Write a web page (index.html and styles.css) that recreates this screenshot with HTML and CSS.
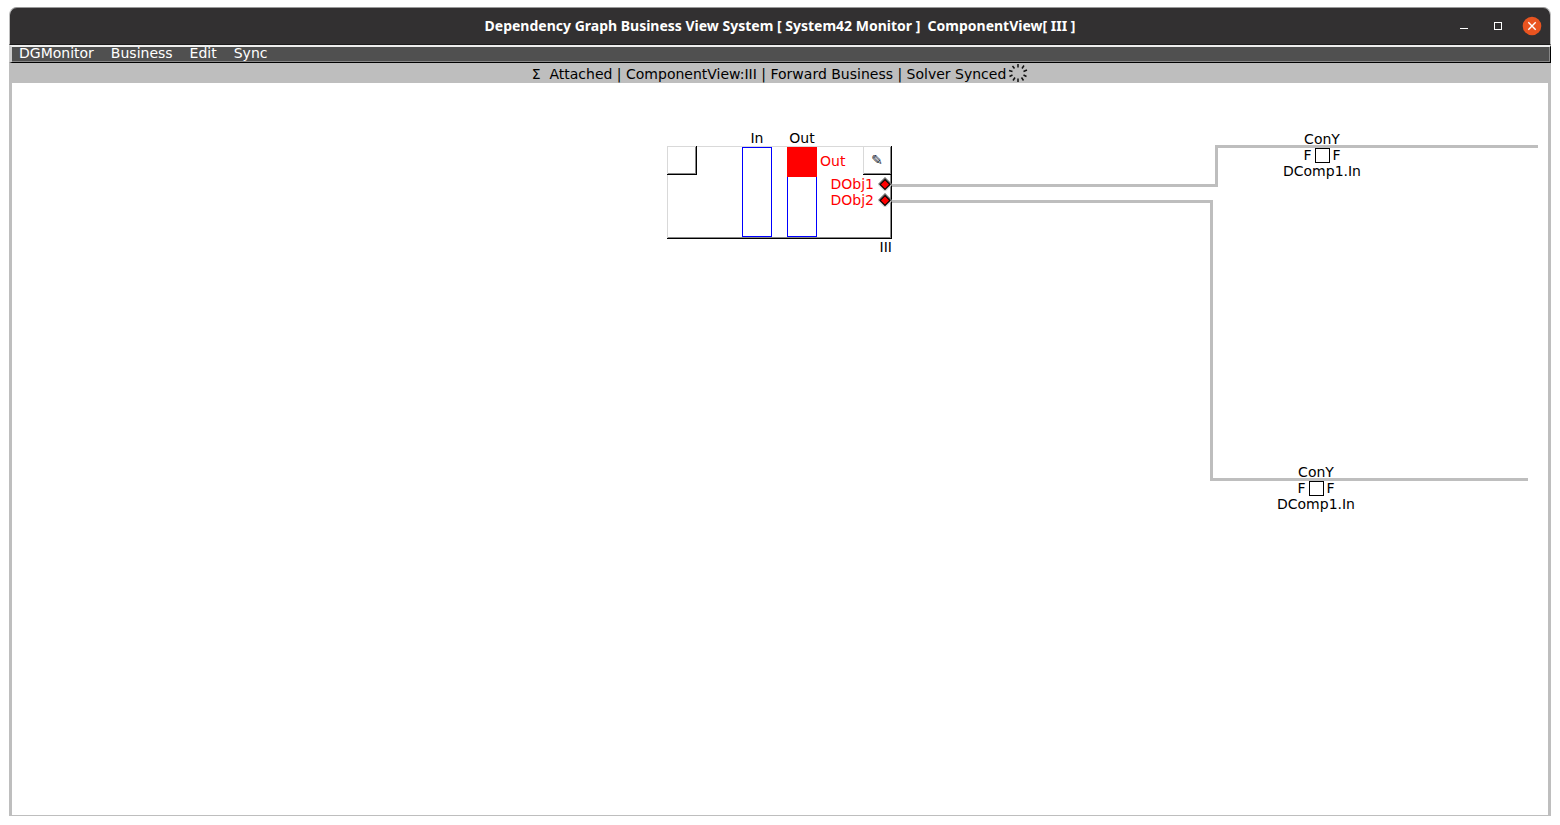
FILE: index.html
```html
<!DOCTYPE html>
<html lang="en">
<head>
<meta charset="utf-8">
<title>Dependency Graph Business View System</title>
<link rel="stylesheet" href="styles.css">
</head>
<body>
<div class="window">
  <header class="titlebar">
    <h1 class="title">Dependency Graph Business View System [ System42 Monitor ]  ComponentView[ III ]</h1>
    <div class="controls">
      <button class="control" type="button" aria-label="Minimize"><svg width="20" height="20"><path d="M6 12.5h8" stroke="#fff"/></svg></button>
      <button class="control" type="button" aria-label="Maximize"><svg width="20" height="20"><rect x="6.5" y="6.5" width="7" height="7" fill="none" stroke="#fff"/></svg></button>
      <button class="control" type="button" aria-label="Close"><svg width="20" height="20"><circle cx="10" cy="10" r="9.3" fill="#e95420"/><path d="M6.3 6.3l7.4 7.4M13.7 6.3l-7.4 7.4" stroke="#fff" stroke-width="1.4"/></svg></button>
    </div>
  </header>
  <nav class="menubar">
    <button class="menu" type="button">DGMonitor</button>
    <button class="menu" type="button">Business</button>
    <button class="menu" type="button">Edit</button>
    <button class="menu" type="button">Sync</button>
  </nav>
  <div class="status">
    <span class="status-text">Σ  Attached | ComponentView:III | Forward Business | Solver Synced</span>
    <svg class="spinner" width="20" height="20" viewBox="-10 -10 20 20"><path d="M0 -9v3.500M4 -4.500l2 -3M5.500 -1.500l3.500 -1.500M5.500 2l3 1.500M3.500 4.500l2 3M0 5.500v3.500M-3 4.500l-2 3M-5.500 2l-3 1.500M-5.500 -1.500l-3.500 -1M-3.500 -4.500l-2 -2.500" fill="none" stroke="#111" stroke-width="1.5"/></svg>
  </div>
  <main class="canvas">
    <svg class="links" width="1536" height="732"><g fill="none" stroke="#bebebe" stroke-width="3"><path d="M880 102.500H1204.500V63.500H1526"/><path d="M880 118.500H1199.500V396.500H1516"/></g></svg>

    <section class="component">
      <div class="columns">
        <span class="label in">In</span>
        <span class="label out">Out</span>
      </div>
      <div class="columns box">
        <button class="corner" type="button" aria-label="Collapse"></button>
        <div class="slot in"></div>
        <div class="slot out"><div class="fill"></div></div>
        <div class="outputs">
          <div class="outputs-head">
            <span>Out</span>
            <button class="corner edit" type="button" aria-label="Edit">✎</button>
          </div>
          <div class="port"><span>DObj1</span><svg width="14" height="14"><path d="M.5 7.500L7 1l6.500 6.500" fill="none" stroke="#777" stroke-width="1.500"/><path d="M.5 7.500L7 14l6.500-6.500" fill="none" stroke="#d9d9d9" stroke-width="1.500"/><path d="M7 2.500L12 7.500 7 12.500 2 7.500z" fill="red" stroke="#000" stroke-width="1.200"/></svg></div>
          <div class="port"><span>DObj2</span><svg width="14" height="14"><path d="M.5 7.500L7 1l6.500 6.500" fill="none" stroke="#777" stroke-width="1.500"/><path d="M.5 7.500L7 14l6.500-6.500" fill="none" stroke="#d9d9d9" stroke-width="1.500"/><path d="M7 2.500L12 7.500 7 12.500 2 7.500z" fill="red" stroke="#000" stroke-width="1.200"/></svg></div>
        </div>
      </div>
      <div class="name">III</div>
    </section>

    <section class="connector first">
      <span>ConY</span>
      <span class="gate">F<i class="square"></i>F</span>
      <span>DComp1.In</span>
    </section>
    <section class="connector second">
      <span>ConY</span>
      <span class="gate">F<i class="square"></i>F</span>
      <span>DComp1.In</span>
    </section>
  </main>
</div>
</body>
</html>
```
FILE: styles.css
```css
* { box-sizing: border-box; }

body {
  margin: 0;
  padding: 7px 9px 9px;
  height: 100vh;
  background: #fff;
  color: #000;
  font: 14px/16px "DejaVu Sans", sans-serif;
}

button {
  margin: 0;
  padding: 0;
  border: 0;
  background: none;
  color: inherit;
  font: inherit;
}

.window {
  display: flex;
  flex-direction: column;
  height: 100%;
}

.titlebar {
  display: grid;
  grid-template-columns: 1fr auto 1fr;
  align-items: center;
  height: 38px;
  border: 1px solid #bebebe;
  border-top-color: #999;
  border-bottom-color: #1c1b1b;
  border-radius: 8px 8px 0 0;
  background: #323031;
  color: #fff;
}

.title {
  grid-column: 2;
  margin: 0;
  font: bold 14px/20px "Noto Sans", sans-serif;
  white-space: pre;
}

.controls {
  display: flex;
  justify-content: flex-end;
  gap: 14px;
  padding-right: 8px;
}

.control, .control svg {
  display: block;
  width: 20px;
  height: 20px;
}

.menubar {
  display: flex;
  gap: 1px;
  height: 18px;
  border: 1px solid #000;
  border-top: 2px solid #eee;
  border-left: 3px solid #ccc;
  box-shadow: inset -1px -1px #888;
  background: #505050;
  color: #fff;
}

.menu {
  height: 13px;
  padding: 0 8px;
  line-height: 13px;
}

.menu:first-child { padding-left: 7px; }

.status {
  display: flex;
  justify-content: center;
  align-items: center;
  height: 20px;
  background: #bebebe;
  white-space: pre;
}

.status-text { padding-top: 2px; }

.spinner { margin-left: 2px; }

.canvas {
  position: relative;
  flex: 1;
  overflow: hidden;
  border: 3px solid #bebebe;
  border-width: 0 3px 1px;
}

.links {
  position: absolute;
  left: 0;
  top: 0;
}

.component {
  position: absolute;
  left: 655px;
  top: 47px;
  width: 225px;
}

.columns {
  display: grid;
  grid-template-columns: 30px 45px 30px 15px 30px 1fr;
}

.in { grid-column: 3; }
.out { grid-column: 5; }

.label {
  display: flex;
  justify-content: center;
  white-space: nowrap;
}

.box {
  height: 93px;
  border-bottom: 1px solid #000;
  box-shadow: inset -1px 0 #000, inset 1px 1px #d9d9d9, inset -2px -1px #888;
}

.corner {
  width: 30px;
  height: 29px;
  border-right: 1px solid #000;
  border-bottom: 1px solid #000;
  box-shadow: inset 1px 1px #d9d9d9, inset -1px -1px #888;
}

.slot {
  height: 90px;
  margin-top: 1px;
  border: 1px solid #00f;
}

.fill {
  height: 30px;
  margin: -1px;
  background: #f00;
}

.outputs {
  grid-column: 6;
  color: #f00;
}

.outputs-head {
  display: flex;
  justify-content: space-between;
  align-items: center;
  margin-bottom: 1px;
  padding-left: 3px;
}

.edit {
  width: 29px;
  color: #123;
}

.port {
  display: flex;
  justify-content: flex-end;
  align-items: center;
  gap: 4px;
  height: 16px;
}

.name { text-align: right; }

.connector {
  position: absolute;
  display: flex;
  flex-direction: column;
  align-items: center;
  width: 80px;
}

.first { left: 1270px; top: 48px; }
.second { left: 1264px; top: 381px; }

.gate {
  display: flex;
  align-items: center;
  gap: 3px;
}

.square {
  width: 15px;
  height: 15px;
  border: 1px solid #000;
  background: #fff;
}
```
